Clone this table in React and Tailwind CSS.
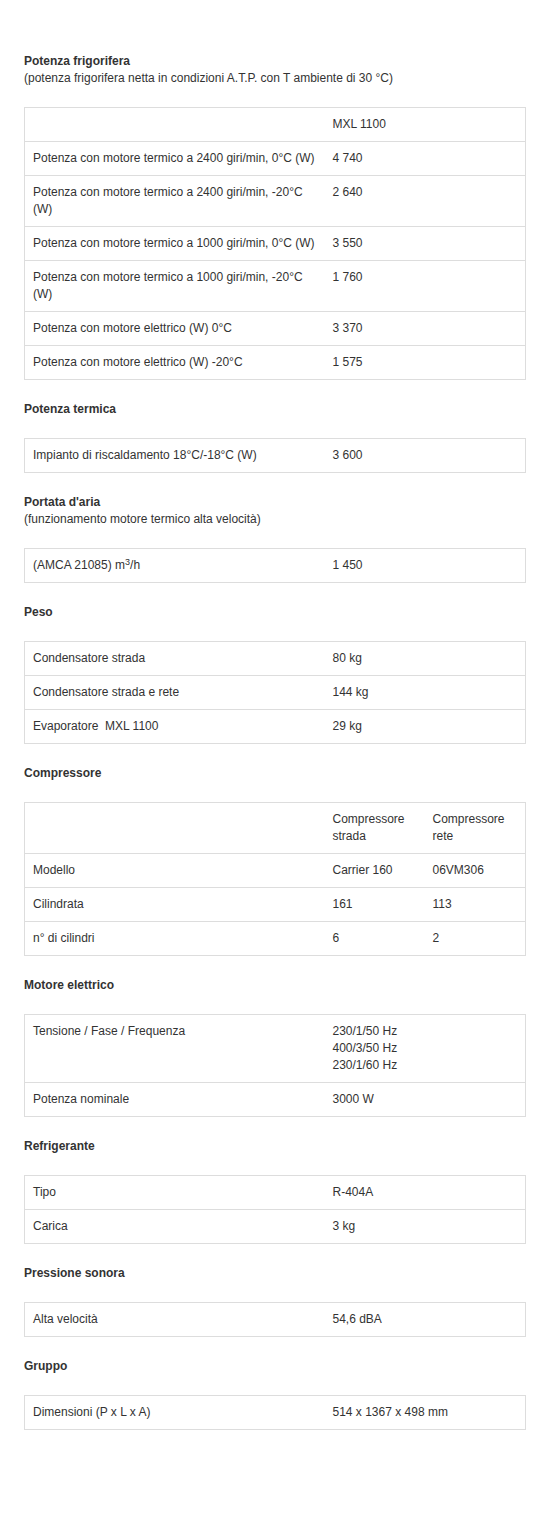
import React from "react";

const sections = [
  {
    title: "Potenza frigorifera",
    subtitle: "(potenza frigorifera netta in condizioni A.T.P. con T ambiente di 30 °C)",
    head: ["", "MXL 1100"],
    rows: [
      ["Potenza con motore termico a 2400 giri/min, 0°C (W)", "4 740"],
      ["Potenza con motore termico a 2400 giri/min, -20°C (W)", "2 640"],
      ["Potenza con motore termico a 1000 giri/min, 0°C (W)", "3 550"],
      ["Potenza con motore termico a 1000 giri/min, -20°C (W)", "1 760"],
      ["Potenza con motore elettrico (W) 0°C", "3 370"],
      ["Potenza con motore elettrico (W) -20°C", "1 575"],
    ],
  },
  {
    title: "Potenza termica",
    rows: [["Impianto di riscaldamento 18°C/-18°C (W)", "3 600"]],
  },
  {
    title: "Portata d'aria",
    subtitle: "(funzionamento motore termico alta velocità)",
    rows: [
      [
        <>
          (AMCA 21085) m<sup>3</sup>/h
        </>,
        "1 450",
      ],
    ],
  },
  {
    title: "Peso",
    rows: [
      ["Condensatore strada", "80 kg"],
      ["Condensatore strada e rete", "144 kg"],
      ["Evaporatore\u00a0 MXL 1100", "29 kg"],
    ],
  },
  {
    title: "Compressore",
    head: ["", "Compressore strada", "Compressore rete"],
    rows: [
      ["Modello", "Carrier 160", "06VM306"],
      ["Cilindrata", "161", "113"],
      ["n° di cilindri", "6", "2"],
    ],
  },
  {
    title: "Motore elettrico",
    rows: [
      [
        "Tensione / Fase / Frequenza",
        <>
          230/1/50 Hz
          <br />
          400/3/50 Hz
          <br />
          230/1/60 Hz
        </>,
      ],
      ["Potenza nominale", "3000 W"],
    ],
  },
  {
    title: "Refrigerante",
    rows: [
      ["Tipo", "R-404A"],
      ["Carica", "3 kg"],
    ],
  },
  {
    title: "Pressione sonora",
    rows: [["Alta velocità", "54,6 dBA"]],
  },
  {
    title: "Gruppo",
    rows: [["Dimensioni (P x L x A)", "514 x 1367 x 498 mm"]],
  },
];

const Cell = ({ children }) => (
  <td className="px-2 py-2 align-top">{children}</td>
);

const SpecTable = ({ head, rows }) => {
  const cols = (head || rows[0]).length;
  const all = head ? [head, ...rows] : rows;
  return (
    <table className="w-full table-fixed border-collapse border border-[#dddddd]">
      <colgroup>
        <col className="w-[300px]" />
        {cols === 2 ? <col /> : (
          <>
            <col className="w-[100px]" />
            <col />
          </>
        )}
      </colgroup>
      <tbody>
        {all.map((r, i) => (
          <tr key={i} className="border-t border-[#dddddd]">
            {r.map((c, j) => (
              <Cell key={j}>{c}</Cell>
            ))}
          </tr>
        ))}
      </tbody>
    </table>
  );
};

export default function App() {
  return (
    <div
      className="min-h-[1536px] bg-white pl-6 pr-[21px] pt-[53px] text-[12px] leading-[17px] text-[#333333]"
      style={{ fontFamily: '"Liberation Sans", Arial, sans-serif' }}
    >
      <div className="flex flex-col gap-[21px]">
        {sections.map((s) => (
          <div key={s.title}>
            <div className="mb-5">
              <div className="font-bold">{s.title}</div>
              {s.subtitle && <div>{s.subtitle}</div>}
            </div>
            <SpecTable head={s.head} rows={s.rows} />
          </div>
        ))}
      </div>
    </div>
  );
}
